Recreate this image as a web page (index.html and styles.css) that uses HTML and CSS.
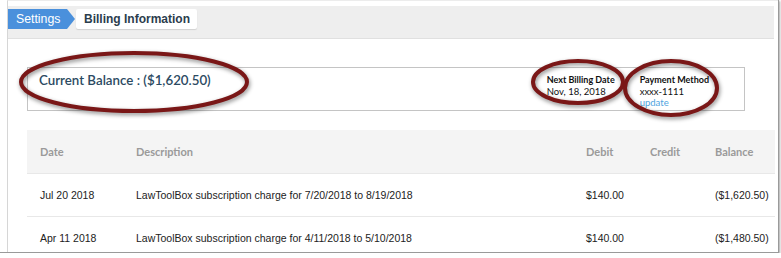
FILE: index.html
```html
<!DOCTYPE html>
<html lang="en">
<head>
    <meta charset="UTF-8">
    <meta name="viewport" content="width=device-width, initial-scale=1.0">
    <title>Billing Information</title>
    <link rel="stylesheet" href="styles.css">
</head>
<body>
    <div class="frame">
        <div class="panel">
            <div class="crumbs">
                <span class="crumb-root">Settings</span>
                <span class="crumb-current">Billing Information</span>
            </div>

            <div class="content">
                <div class="balance-box">
                    <div class="balance-title">Current Balance : ($1,620.50)</div>
                    <div class="balance-meta">
                        <div class="meta-item meta-date">
                            <strong>Next Billing Date</strong>
                            <span>Nov, 18, 2018</span>
                        </div>
                        <div class="meta-item">
                            <strong>Payment Method</strong>
                            <span>xxxx-1111</span>
                            <a href="#" class="update-link">update</a>
                        </div>
                    </div>
                </div>

                <table class="ledger">
                    <thead>
                        <tr>
                            <th class="col-date">Date</th>
                            <th class="col-desc">Description</th>
                            <th class="col-debit">Debit</th>
                            <th class="col-credit">Credit</th>
                            <th class="col-balance">Balance</th>
                        </tr>
                    </thead>
                    <tbody>
                        <tr>
                            <td>Jul 20 2018</td>
                            <td>LawToolBox subscription charge for 7/20/2018 to 8/19/2018</td>
                            <td>$140.00</td>
                            <td></td>
                            <td>($1,620.50)</td>
                        </tr>
                        <tr>
                            <td>Apr 11 2018</td>
                            <td>LawToolBox subscription charge for 4/11/2018 to 5/10/2018</td>
                            <td>$140.00</td>
                            <td></td>
                            <td>($1,480.50)</td>
                        </tr>
                    </tbody>
                </table>
            </div>
        </div>

        <!-- annotation circles drawn over the screenshot -->
        <svg class="marks" width="781" height="258" viewBox="0 0 781 258">
            <ellipse cx="134" cy="82" rx="113" ry="29"/>
            <ellipse cx="578" cy="82" rx="45" ry="21"/>
            <ellipse cx="671" cy="88" rx="46" ry="27"/>
        </svg>
    </div>
</body>
</html>
```

FILE: styles.css
```css
body {
    margin: 0;
    padding: 0;
    background: #fff;
    font-family: "Liberation Sans", Arial, sans-serif;
}
.frame {
    position: relative;
    width: 778px;
    height: 252px;
    overflow: hidden;
    background: #fff;
    border-right: 1px solid #9a9a9a;
    border-bottom: 1px solid #9a9a9a;
    box-shadow: 1px 1px 2px rgba(0, 0, 0, 0.35);
}
.panel {
    margin-left: 7px;
    height: 100%;
    border-left: 1px solid #d6d6d6;
    border-top: 1px solid #ececec;
    padding-top: 5px;
    padding-right: 4px;
}
.crumbs {
    display: flex;
    align-items: flex-start;
    height: 33px;
    padding-top: 3px;
    background: #eeeeee;
    border-bottom: 1px solid #e0e0e0;
    box-sizing: border-box;
}
.crumb-root {
    position: relative;
    height: 20px;
    line-height: 20px;
    padding: 0 0 0 8px;
    width: 51px;
    background: #4a90dc;
    color: #fff;
    font-size: 12.3px;
}
.crumb-root::after {
    content: "";
    position: absolute;
    right: -8px;
    top: 0;
    border-top: 10px solid transparent;
    border-bottom: 10px solid transparent;
    border-left: 8px solid #4a90dc;
}
.crumb-current {
    margin-left: 9px;
    height: 20px;
    line-height: 20px;
    padding: 0 7px 0 8px;
    background: #fff;
    color: #2b3d4d;
    font-weight: bold;
    font-size: 12px;
    border-radius: 2px;
    box-shadow: 0 1px 1px rgba(0, 0, 0, 0.12);
}
.content {
    padding: 28px 0 0 19px;
}
.balance-box {
    display: flex;
    justify-content: space-between;
    width: 718px;
    height: 44px;
    box-sizing: border-box;
    border: 1px solid #c4c4c4;
    padding: 4px 26px 0 11px;
}
.balance-title {
    font-family: Lato, sans-serif;
    font-size: 13.3px;
    font-weight: 600;
    color: #2c4a62;
    line-height: 17px;
}
.balance-meta {
    display: flex;
    padding-top: 2px;
    padding-right: 9px;
    font-family: Lato, sans-serif;
    font-size: 9.5px;
    line-height: 11.5px;
    color: #111;
}
.meta-item {
    display: flex;
    flex-direction: column;
}
.meta-item strong {
    font-weight: bold;
    font-size: 9px;
}
.meta-date {
    width: 93px;
}
.update-link {
    color: #4fa3e0;
    text-decoration: none;
}
.ledger {
    margin-top: 19px;
    width: 746px;
    border-collapse: collapse;
    table-layout: fixed;
    font-size: 10.5px;
    color: #222;
}
.ledger th {
    height: 43px;
    background: #f4f4f4;
    color: #9a9a9a;
    font-family: Lato, sans-serif;
    font-weight: bold;
    font-size: 11px;
    text-align: left;
    padding: 0 0 0 13px;
    border-bottom: 1px solid #e8e8e8;
}
.ledger td {
    height: 42px;
    padding: 0 0 0 13px;
    border-bottom: 1px solid #e8e8e8;
}
.col-date { width: 83px; }
.col-desc { width: 437px; }
.col-debit { width: 51px; }
.col-credit { width: 52px; }
.col-balance { width: 60px; }
.marks {
    position: absolute;
    left: 0;
    top: 0;
    pointer-events: none;
    filter: drop-shadow(1px 2px 2px rgba(0, 0, 0, 0.45));
}
.marks ellipse {
    fill: none;
    stroke: #7a1717;
    stroke-width: 4;
}
```
